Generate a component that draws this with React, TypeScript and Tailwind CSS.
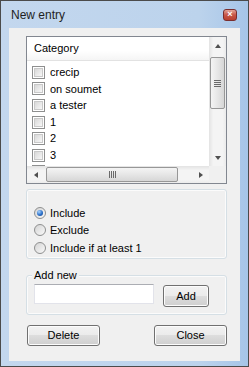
import type { ReactNode } from "react";

// the last row is only partly visible above the horizontal scrollbar
const categories = ["crecip", "on soumet", "a tester", "1", "2", "3", ""];

const buttonClass = [
  "flex items-center justify-center rounded-[3px] border border-[#707070]",
  "bg-[linear-gradient(to_bottom,#f2f2f2_0%,#ebebeb_50%,#dddddd_50%,#cfcfcf_100%)]",
  "shadow-[inset_0_0_0_1px_#fcfcfc] text-[11px] text-black",
].join(" ");

function Checkbox() {
  return (
    <span className="flex h-[13px] w-[13px] shrink-0 items-center justify-center border border-[#8e8f8f] bg-white">
      <span className="h-[9px] w-[9px] border border-[#c9c9c9] bg-[linear-gradient(135deg,#d8d8d8,#f7f7f7)]" />
    </span>
  );
}

function Radio({ checked = false }: { checked?: boolean }) {
  return (
    <span className="flex h-[12px] w-[12px] shrink-0 items-center justify-center rounded-full border border-[#8e8f8f] bg-[linear-gradient(135deg,#d4d4d4,#f9f9f9)]">
      {checked ? (
        <span className="h-[6px] w-[6px] rounded-full bg-[radial-gradient(circle_at_35%_30%,#a9d4ff,#2a6fc9_55%,#12418a)]" />
      ) : null}
    </span>
  );
}

function Arrow({ dir }: { dir: "up" | "down" | "left" | "right" }) {
  const shape = {
    up: "border-x-[3.5px] border-b-[4px] border-x-transparent border-b-[#505050]",
    down: "border-x-[3.5px] border-t-[4px] border-x-transparent border-t-[#505050]",
    left: "border-y-[3.5px] border-r-[4px] border-y-transparent border-r-[#505050]",
    right: "border-y-[3.5px] border-l-[4px] border-y-transparent border-l-[#505050]",
  }[dir];
  return (
    <span className="flex h-[17px] w-[17px] shrink-0 items-center justify-center">
      <span className={`h-0 w-0 ${shape}`} />
    </span>
  );
}

function GroupBox({ children, className = "" }: { children: ReactNode; className?: string }) {
  return (
    <div className={`rounded-[3px] border border-[#d5dfe5] shadow-[inset_0_0_0_1px_#fbfbfb] ${className}`}>
      {children}
    </div>
  );
}

export default function App() {
  return (
    <div className="flex h-[367px] w-[249px] flex-col border border-[#4b4b4b] bg-[linear-gradient(to_right,#c3d7ee,#bcd3ec_80%,#a6c5e8)] font-['Liberation_Sans',Arial,sans-serif] text-[10.5px] text-black">
      <div className="flex h-[27px] shrink-0 items-center justify-between pl-[10px] pr-[11px]">
        <span className="text-[12px] text-[#1e1e1e]">New entry</span>
        <span className="flex h-[12px] w-[14px] items-center justify-center rounded-[3px] border border-[#7a2e2e] bg-[linear-gradient(to_bottom,#e4a497,#c75646_50%,#b9402f)] text-[9px] font-bold leading-none text-white">
          ×
        </span>
      </div>

      <div className="mx-[8px] mb-[5px] flex flex-1 flex-col bg-[#f0f0f0] pl-[17px] pr-[13px] pt-[8px]">
        {/* category list */}
        <div className="grid h-[148px] shrink-0 grid-cols-[1fr_17px] grid-rows-[1fr_17px] border border-[#828790] bg-white">
          <div className="overflow-hidden">
            <div className="flex h-[24px] items-center border-b border-[#e2e2e2] bg-[linear-gradient(to_bottom,#ffffff,#ffffff_60%,#f5f5f5)] pl-[7px] text-[11px]">
              Category
            </div>
            <div className="pt-[3px]">
              {categories.map((name, index) => (
                <div key={index} className="flex h-[16.6px] items-center gap-[5px] pl-[5px] text-[11px]">
                  <Checkbox />
                  {name ? <span>{name}</span> : null}
                </div>
              ))}
            </div>
          </div>

          <div className="flex flex-col bg-[linear-gradient(to_right,#e3e3e3,#f4f4f4_25%,#f4f4f4_80%,#ebebeb)]">
            <Arrow dir="up" />
            <div className="mx-[1px] mt-[3px] flex h-[52px] items-center justify-center rounded-[2px] border border-[#979797] bg-[linear-gradient(to_right,#f4f4f4,#e6e6e6_50%,#d6d6d6)]">
              <div className="flex flex-col gap-[1px]">
                <span className="h-[1px] w-[7px] bg-[#6a6a6a]" />
                <span className="h-[1px] w-[7px] bg-[#6a6a6a]" />
                <span className="h-[1px] w-[7px] bg-[#6a6a6a]" />
                <span className="h-[1px] w-[7px] bg-[#6a6a6a]" />
              </div>
            </div>
            <div className="flex-1" />
            <Arrow dir="down" />
          </div>

          <div className="flex items-center bg-[linear-gradient(to_bottom,#e3e3e3,#f4f4f4_25%,#f4f4f4_80%,#ebebeb)]">
            <Arrow dir="left" />
            <div className="ml-[2px] flex h-[15px] w-[132px] items-center justify-center rounded-[2px] border border-[#979797] bg-[linear-gradient(to_bottom,#f4f4f4,#e6e6e6_50%,#d6d6d6)]">
              <div className="flex gap-[1px]">
                <span className="h-[7px] w-[1px] bg-[#6a6a6a]" />
                <span className="h-[7px] w-[1px] bg-[#6a6a6a]" />
                <span className="h-[7px] w-[1px] bg-[#6a6a6a]" />
                <span className="h-[7px] w-[1px] bg-[#6a6a6a]" />
              </div>
            </div>
            <div className="flex-1" />
            <Arrow dir="right" />
          </div>
          <div className="bg-[#f0f0f0]" />
        </div>

        {/* include options */}
        <GroupBox className="mt-[5px] h-[70px] shrink-0 pl-[7px] pt-[14px]">
          {[
            { label: "Include", checked: true },
            { label: "Exclude", checked: false },
            { label: "Include if at least 1", checked: false },
          ].map((item) => (
            <div key={item.label} className="flex h-[17.5px] items-center gap-[4px] text-[11px]">
              <Radio checked={item.checked} />
              <span>{item.label}</span>
            </div>
          ))}
        </GroupBox>

        {/* add new */}
        <GroupBox className="relative mt-[16px] flex h-[40px] shrink-0 items-start pl-[7px] pt-[8px]">
          <span className="absolute left-[5px] top-[-7px] bg-[#f0f0f0] px-[2px] text-[11px] leading-[13px]">
            Add new
          </span>
          <div className="h-[20px] w-[120px] border border-[#e2e3ea] border-t-[#abadb3] bg-white" />
          <button type="button" className={`${buttonClass} ml-[9px] mt-[1px] h-[22px] w-[46px]`}>
            Add
          </button>
        </GroupBox>

        <div className="mt-[10px] flex justify-between pl-[1px]">
          <button type="button" className={`${buttonClass} h-[21px] w-[73px]`}>
            Delete
          </button>
          <button type="button" className={`${buttonClass} h-[21px] w-[73px]`}>
            Close
          </button>
        </div>
      </div>
    </div>
  );
}
